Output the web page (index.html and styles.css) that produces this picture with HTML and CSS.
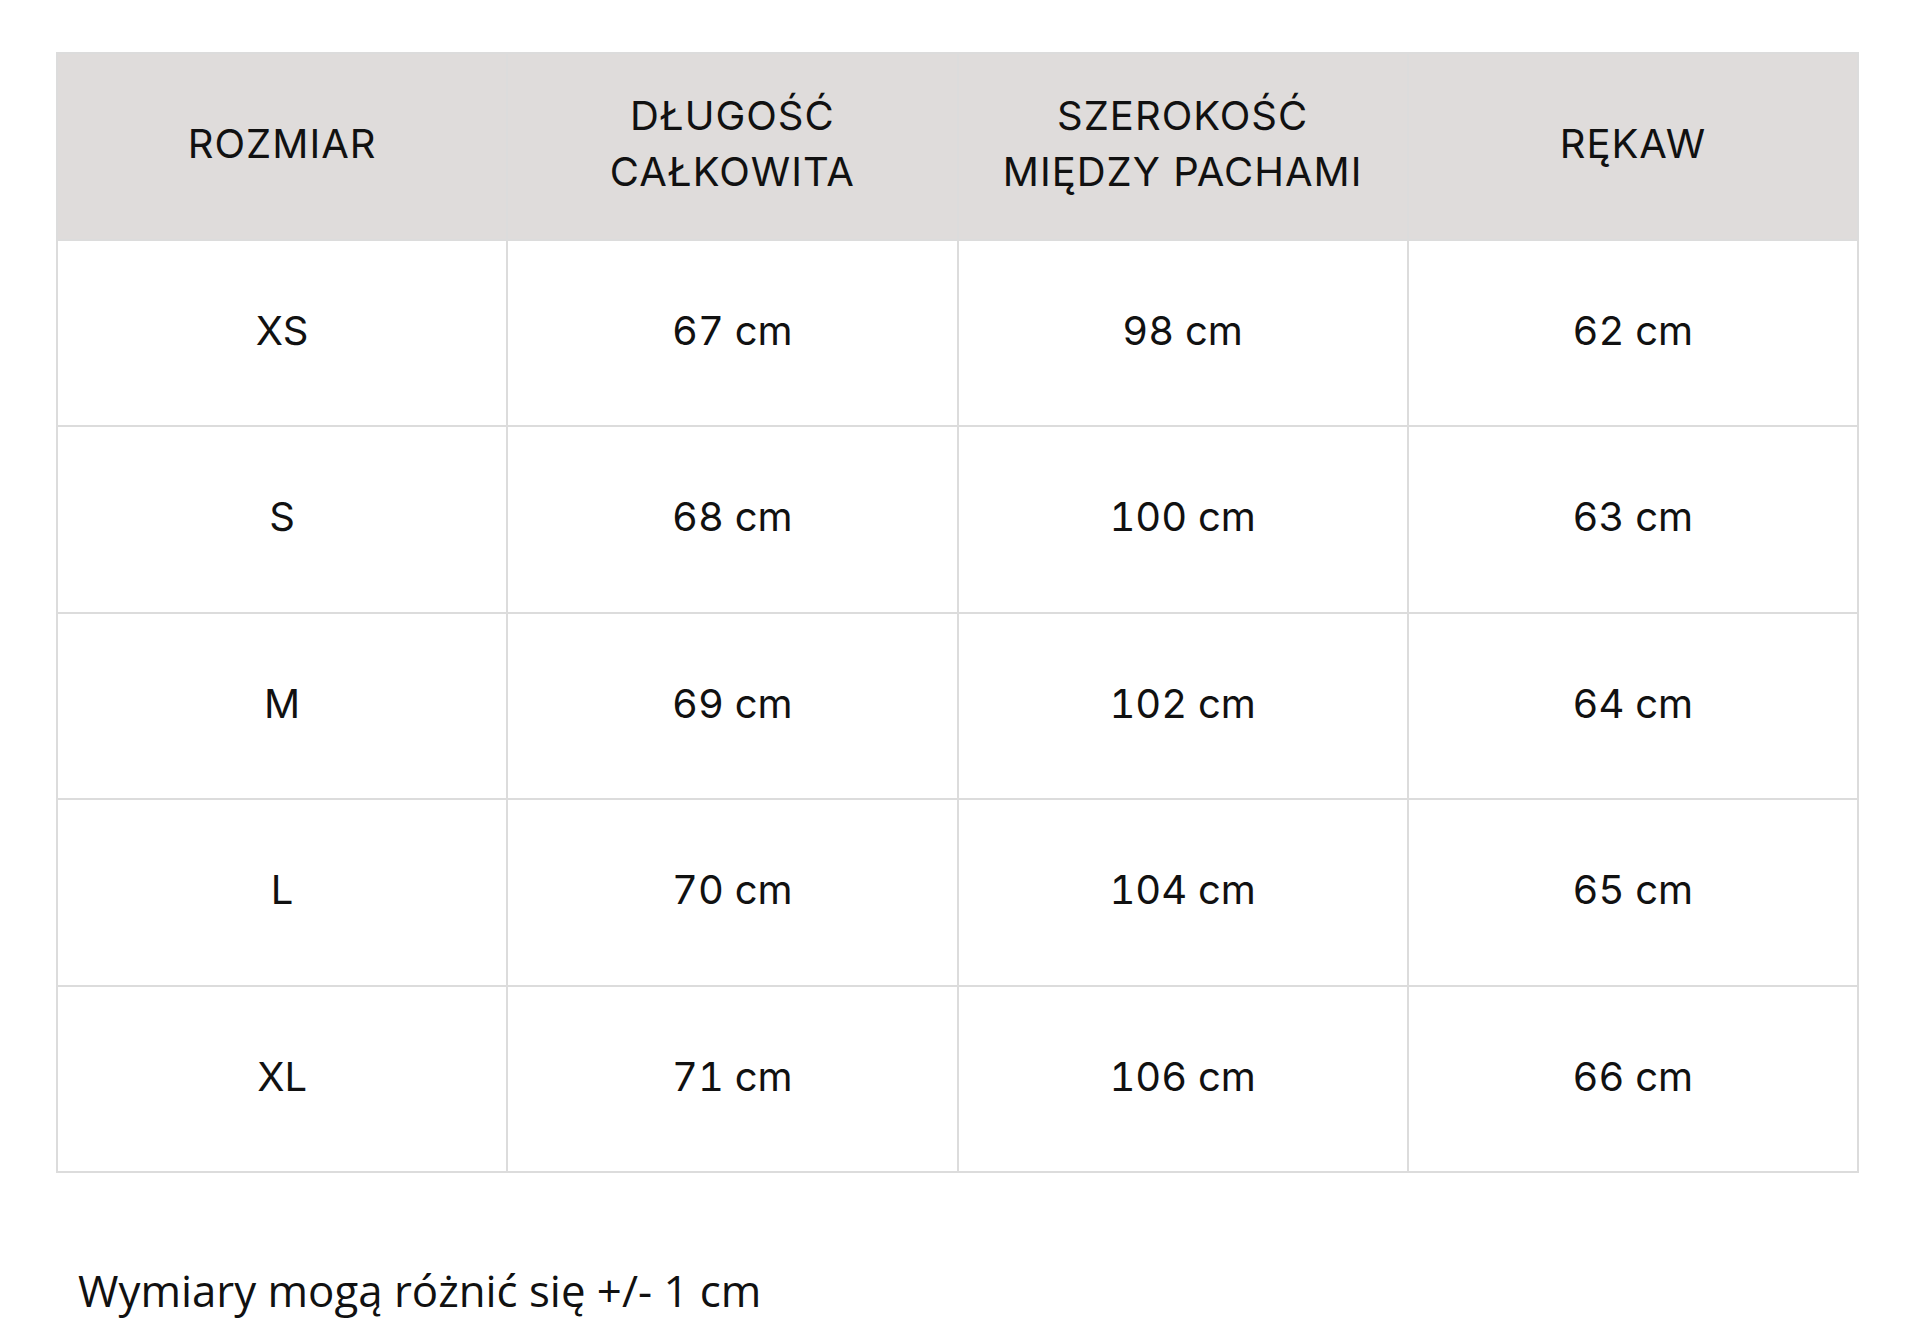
FILE: index.html
```html
<!DOCTYPE html>
<html lang="pl">
<head>
<meta charset="utf-8">
<title>Tabela rozmiarów</title>
<link rel="stylesheet" href="styles.css">
</head>
<body>
<main class="page">
  <table class="size-table">
    <thead>
      <tr>
        <th>ROZMIAR</th>
        <th>DŁUGOŚĆ<br>CAŁKOWITA</th>
        <th>SZEROKOŚĆ<br>MIĘDZY PACHAMI</th>
        <th>RĘKAW</th>
      </tr>
    </thead>
    <tbody>
      <tr><td>XS</td><td>67 cm</td><td>98 cm</td><td>62 cm</td></tr>
      <tr><td>S</td><td>68 cm</td><td>100 cm</td><td>63 cm</td></tr>
      <tr><td>M</td><td>69 cm</td><td>102 cm</td><td>64 cm</td></tr>
      <tr><td>L</td><td>70 cm</td><td>104 cm</td><td>65 cm</td></tr>
      <tr><td>XL</td><td>71 cm</td><td>106 cm</td><td>66 cm</td></tr>
    </tbody>
  </table>
  <p class="note">Wymiary mogą różnić się +/- 1 cm</p>
</main>
</body>
</html>
```
FILE: styles.css
```css
html, body {
  margin: 0;
  padding: 0;
  background: #ffffff;
}

.page {
  padding: 52px 0 0 56px;
}

.size-table {
  width: 1803px;
  border-collapse: collapse;
  table-layout: fixed;
  font-family: Inter, "Liberation Sans", sans-serif;
  font-size: 40px;
  color: #111111;
}

.size-table th,
.size-table td {
  height: 180.5px;
  padding: 0 0 4px 0;
  text-align: center;
  vertical-align: middle;
  border: 2px solid #dcdcdc;
  font-weight: 400;
  line-height: 56px;
}

.size-table th {
  background: #dfdcdb;
  letter-spacing: 1px;
}

.size-table td {
  font-variant-numeric: tabular-nums;
}

.note {
  margin: 87px 0 0 22px;
  font-family: "Open Sans", sans-serif;
  font-size: 43.8px;
  line-height: 60px;
  color: #111111;
}
```
